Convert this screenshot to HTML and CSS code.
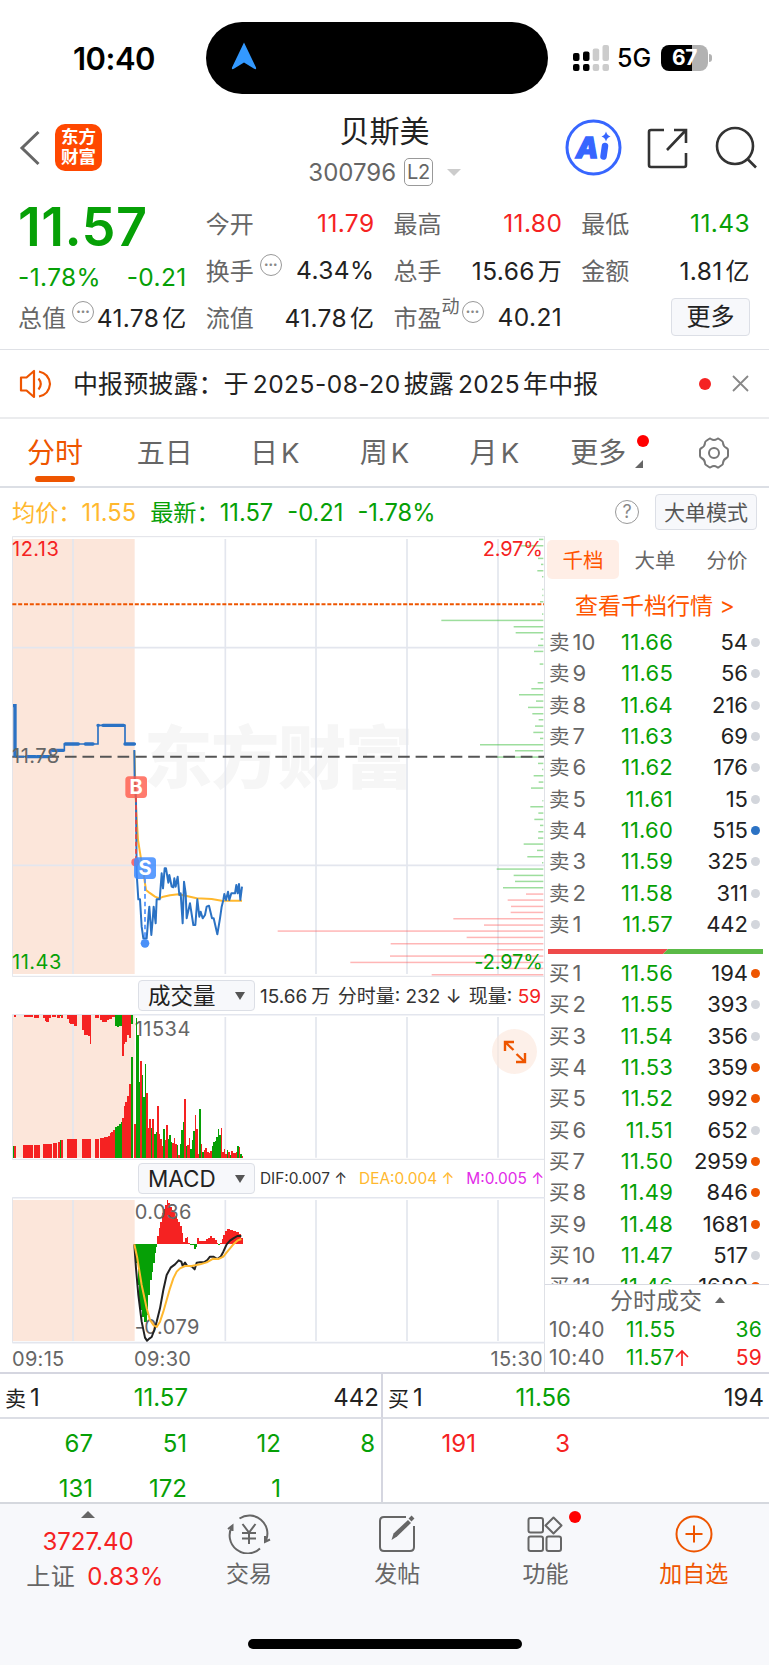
FILE: index.html
```html
<!DOCTYPE html>
<html lang="zh-CN">
<head>
    <meta charset="UTF-8">
    <meta name="viewport" content="width=device-width, initial-scale=1.0">
    <title>贝斯美 300796</title>
    <link rel="stylesheet" href="styles.css">
</head>
<body>
    <div class="status-bar">
        <div class="clock">10:40</div>
        <div class="island">
            <svg width="26" height="30" viewBox="0 0 26 30"><path d="M13 .5 25 25.500q.6 2.600-1.800 1.200L13 20.500 2.800 26.700Q.4 28.100 1 25.500Z" fill="#3399ff"/></svg>
        </div>
        <svg class="signal" width="37" height="26" viewBox="0 0 37 26">
            <g fill="#000"><rect x="0" y="8" width="6.500" height="8" rx="2"/><rect x="10" y="6.500" width="6.500" height="9.500" rx="2"/><rect x="0" y="19" width="6.500" height="7" rx="2"/><rect x="10" y="19" width="6.500" height="7" rx="2"/></g>
            <g fill="#ccc"><rect x="19.700" y="3.500" width="6.500" height="12.500" rx="2"/><rect x="29.500" y="0" width="6.500" height="16" rx="2"/><rect x="19.700" y="19" width="6.500" height="7" rx="2"/><rect x="29.500" y="19" width="6.500" height="7" rx="2"/></g>
        </svg>
        <div class="network">5G</div>
        <div class="battery">67</div>
        <div class="battery-tip"></div>
    </div>

    <div class="title-bar">
        <div class="title-left">
            <svg width="22" height="38" viewBox="0 0 22 38"><path d="M19.500 3 3 19l16.500 16" fill="none" stroke="#666" stroke-width="3"/></svg>
            <div class="logo">东方<br>财富</div>
        </div>
        <div class="title-center">
            <div class="stock-name">贝斯美</div>
            <div class="stock-code">300796<span class="level">L2</span><i class="tri-down"></i></div>
        </div>
        <div class="title-right">
            <svg width="57" height="57" viewBox="0 0 57 57"><circle cx="28.500" cy="28.500" r="26.500" fill="#fff" stroke="#3766ff" stroke-width="3"/><text x="11" y="39" class="ai-text" textLength="21">A</text><path d="m40 27-1.500 10.500" stroke="#3766ff" stroke-width="6.500" stroke-linecap="round"/><path d="M41 12.500q1 4 4.500 5-3.500 1-4.500 5-1-4-4.500-5 3.500-1 4.500-5Z" fill="#3766ff"/></svg>
            <svg width="44" height="44" viewBox="0 0 44 44" fill="none" stroke="#333" stroke-width="2.600"><path d="M18 4H5q-2 0-2 2v33q0 2 2 2h33q2 0 2-2V27M28 4h12v13M39.500 4.500 21 24"/></svg>
            <svg width="44" height="44" viewBox="0 0 44 44" fill="none" stroke="#333" stroke-width="2.600"><circle cx="21" cy="20" r="18"/><path d="M33.500 33 42 41.500"/></svg>
        </div>
    </div>

    <div class="quote">
        <div class="price-box down">
            <div class="price">11.57</div>
            <div class="cell"><span>-1.78%</span><span>-0.21</span></div>
        </div>
        <div class="cell"><label>今开</label><span class="up">11.79</span></div>
        <div class="cell"><label>最高</label><span class="up">11.80</span></div>
        <div class="cell"><label>最低</label><span class="down">11.43</span></div>
        <div class="cell"><label>换手<i class="dots">•••</i></label><span>4.34%</span></div>
        <div class="cell"><label>总手</label><span>15.66<b>万</b></span></div>
        <div class="cell"><label>金额</label><span>1.81<b>亿</b></span></div>
        <div class="cell"><label>总值<i class="dots">•••</i></label><span>41.78<b>亿</b></span></div>
        <div class="cell"><label>流值</label><span>41.78<b>亿</b></span></div>
        <div class="cell"><label>市盈<sup>动</sup><i class="dots tight">•••</i></label><span>40.21</span></div>
        <div class="cell right"><button class="more-btn">更多</button></div>
    </div>

    <div class="notice">
        <svg width="34" height="30" viewBox="0 0 34 30" fill="none" stroke="#ee5500" stroke-width="2.200"><path d="M2 8.500h5.500L15 2v26l-7.500-6.500H2Z" stroke-linejoin="round"/><path d="M19.500 9.500q4.500 5.500 0 11M20 2.500q10 2 11 12.500-1 10.500-11 12.500"/></svg>
        <div class="notice-text">中报预披露：于<em>2025-08-20</em>披露<em>2025</em>年中报</div>
        <i class="red-dot"></i>
        <svg width="17" height="17" viewBox="0 0 17 17"><path d="m1 1 15 15M16 1 1 16" stroke="#888" stroke-width="1.800"/></svg>
    </div>

    <div class="tabs">
        <div class="tab active">分时</div>
        <div class="tab">五日</div>
        <div class="tab">日<em>K</em></div>
        <div class="tab">周<em>K</em></div>
        <div class="tab">月<em>K</em></div>
        <div class="tab more">更多<i class="red-dot"></i><i class="corner"></i></div>
        <div class="tab gear">
            <svg width="34" height="32" viewBox="0 0 34 32" fill="none" stroke="#777" stroke-width="2"><path d="M12 2q1-1 2 0 3 2 6 0 1-1 2 0l3 2q1 .6 1 2 .3 3.500 3.500 5 1.500.8 1.500 2v6q0 1.200-1.500 2-3.200 1.500-3.500 5 0 1.400-1 2l-3 2q-1 1-2 0-3-2-6 0-1 1-2 0l-3-2q-1-.6-1-2-.3-3.500-3.500-5Q3 20.200 3 19v-6q0-1.200 1.500-2Q7.700 9.500 8 6q0-1.400 1-2Z" stroke-linejoin="round"/><circle cx="17" cy="16" r="5"/></svg>
        </div>
    </div>

    <div class="info-row">
        <span class="avg">均价：<em>11.55</em></span>
        <span class="down">最新：<em>11.57</em><em>-0.21</em><em>-1.78%</em></span>
        <i class="help">?</i>
        <button class="mode-btn">大单模式</button>
    </div>

    <div class="main">
        <div class="charts">
            <!-- price chart, three units per pixel -->
            <svg class="chart" width="533" height="441" viewBox="36 18 1599 1323">
                <rect x="37" y="27" width="367" height="1305" fill="#fce6da"/>
                <text class="watermark" x="432" y="760" textLength="808">东方财富</text>
                <g class="grid"><path d="M37 20h1598M37 1339h1598M37 20v1319"/><path class="thick" d="M37 353h1595M37 1006h1595M219 27v1305M676 27v1305M948 27v1305M1221 27v1305M1494 27v1305"/></g>
                <g id="profile"></g>
                <path d="M37 223h1595" stroke="#ee5500" stroke-width="6" stroke-dasharray="12 5.500"/>
                <path d="M37 680h1595" stroke="#555" stroke-width="6" stroke-dasharray="35 17.600"/>
                <g class="price-line"><path stroke-width="10" d="M39 527h6v153"/><path stroke-width="5" d="M45 680h107v-19h41v-19h101v-56h81v56h32"/><path stroke-width="10" stroke-linecap="round" d="M80 680h26M112 680h34M158 661h32M196 642h39M256 642h23M294 586h1M309 586h62M375 642h28"/></g>
                <g transform="translate(360 630)" fill="none" stroke-width="6" stroke-linejoin="round">
                    <path stroke="#ffb82e" d="M43 32 48 200 54 300 62 350 72 410 78 450 88 458 105 470 118 475 130 470 150 466 175 463 200 468 230 475 275 477 305 482H366"/>
                    <path stroke="#2b72c4" d="M43 30 44 120 48 180 50 400 55 478H60L65 560 70 595H80L86 520 88 500 94 585 98 540 101 500 107 550 110 478H119L122 440 125 400 129 445 134 385H138L145 428 148 405 155 440 160 442 163 415 167 440 173 410 178 465 182 460 188 550 192 425 197 460 200 535 210 490 220 555H226L232 478 238 530 242 515 248 535 255 525 260 500 267 497 276 535H281L292 583 300 535 305 500 310 480 313 462 318 480 324 455 328 480 334 460H345L349 435 353 460 357 432 361 480 366 440"/>
                </g>
                <path d="M408 803v195" stroke="#f5453a" stroke-width="5" stroke-dasharray="14 8"/>
                <circle cx="406" cy="997" r="12" fill="#fa6b70"/>
                <path d="M435 1046v190" stroke="#4a90ff" stroke-width="5" stroke-dasharray="14 9"/>
                <circle cx="435" cy="1240" r="13" fill="#4a90f8"/>
                <rect x="376" y="739" width="65" height="65" rx="11" fill="#ff5a4a" opacity=".8"/>
                <text class="mark" x="408" y="793">B</text>
                <rect x="402" y="982" width="66" height="65" rx="11" fill="#3f8cff" opacity=".85"/>
                <text class="mark" x="435" y="1036">S</text>
                <g class="axis"><text class="up" x="36" y="77">12.13</text><text x="36" y="698">11.78</text><text class="down" x="36" y="1317">11.43</text><text class="up end" x="1628" y="77">2.97%</text><text class="down end" x="1628" y="1317">-2.97%</text></g>
            </svg>

            <div class="sub-head">
                <button>成交量<i></i></button>
                <div class="vol-text"><span>15.66<b>万</b></span><span>分时量: 232 ↓</span><span>现量: <em class="up">59</em></span></div>
            </div>
            <div class="chart-wrap">
                <svg class="chart" width="533" height="146" viewBox="36 117 1599 438">
                    <rect x="37" y="119" width="367" height="429" fill="#fce6da"/>
                    <g class="grid"><path class="thick" d="M37 119h1598"/><path d="M37 553h1598M37 119v434"/><path class="thick" d="M219 126v422M676 126v422M948 126v422M1221 126v422M1494 126v422"/></g>
                    <g class="axis"><text x="404" y="183">11534</text></g>
                    <g id="volume" shape-rendering="crispEdges"></g>
                </svg>
                <div class="expand">
                    <svg width="24" height="24" viewBox="0 0 24 24" fill="none" stroke="#ee5500" stroke-width="2.400"><path d="M2 11V2h9M2 2l8.500 8M22 13v9h-9M22 22l-8.500-8"/></svg>
                </div>
            </div>

            <div class="sub-head">
                <button>MACD<i></i></button>
                <div class="macd-text"><span>DIF:0.007 ↑</span><span class="avg">DEA:0.004 ↑</span><span class="magenta">M:0.005 ↑</span></div>
            </div>
            <svg class="chart" width="533" height="147" viewBox="36 666 1599 441">
                <rect x="37" y="675" width="367" height="423" fill="#fce6da"/>
                <g class="grid"><path class="thick" d="M37 668h1598M37 1103h1598"/><path d="M37 668v435"/><path class="thick" d="M219 675v423M676 675v423M948 675v423M1221 675v423M1494 675v423"/></g>
                <g id="macd" shape-rendering="crispEdges"></g>
                <g class="axis"><text x="404" y="732">0.036</text><text x="404" y="1078">-0.079</text></g>
                <path fill="none" stroke="#222" stroke-width="6" stroke-linejoin="round" d="M403 808 408 880 415 960 425 1040 435 1088 441 1097 449 1090 455 1086 463 1065 470 1040 480 1000 490 945 500 900 512 878 525 868 536 856 544 860 548 873 555 863 561 872 575 874 584 883 590 863 600 862H612L622 855 630 845H640L652 852 662 845 670 830 680 808 690 797 700 790 712 783H724"/>
                <path fill="none" stroke="#ffb82e" stroke-width="6" stroke-linejoin="round" d="M403 808 412 850 425 930 440 1000 450 1035 460 1050 470 1056 480 1040 490 1010 500 975 510 940 520 910 530 890 540 880 555 873H575L600 868 620 862 640 851 655 852 670 845 685 826 700 808 712 797 724 792"/>
            </svg>
            <div class="times"><span>09:15</span><span>09:30</span><span>15:30</span></div>
        </div>

        <div class="book">
            <div class="book-tabs"><span class="active">千档</span><span>大单</span><span>分价</span></div>
            <div class="book-link">查看千档行情 &gt;</div>
            <div class="levels" id="sells"></div>
            <div class="ratio"><svg width="215" height="5" viewBox="0 0 215 5"><path d="M0 0h120l-5 5H0Z" fill="#ee4a4a"/><path d="M120 0h95v5H115Z" fill="#5bba47"/></svg></div>
            <div class="levels buys" id="buys"></div>
            <div class="deals">
                <div class="deals-title">分时成交<i class="tri-up"></i></div>
                <div class="deal"><span>10:40</span><span class="down">11.55</span><span class="down">36</span></div>
                <div class="deal"><span>10:40</span><span class="down">11.57<svg width="14" height="18" viewBox="0 0 14 18" fill="none" stroke="#f52222" stroke-width="1.700"><path d="M7 17V2M1 8l6-6 6 6"/></svg></span><span class="up">59</span></div>
            </div>
        </div>
    </div>

    <div class="queue">
        <div class="queue-head"><span>卖<em>1</em></span><span class="down">11.57</span><span>442</span></div>
        <div class="queue-head"><span>买<em>1</em></span><span class="down">11.56</span><span>194</span></div>
        <div class="queue-list down"><span>67</span><span>51</span><span>12</span><span>8</span><span>131</span><span>172</span><span>1</span></div>
        <div class="queue-list up"><span>191</span><span>3</span></div>
    </div>

    <div class="bottom">
        <div class="bottom-row">
            <div class="index-box">
                <i class="tri-up"></i>
                <div class="up">3727.40</div>
                <div class="index-change"><b>上证</b><span class="up">0.83%</span></div>
            </div>
            <div class="nav-item">
                <svg width="44" height="40" viewBox="0 0 44 40" fill="none" stroke="#666" stroke-width="2"><path d="M12.500 4.500A18 18 0 0 1 39 26.500M33 34.500A18 18 0 0 1 5 12.500M1 15l4.500-3.500V17M38 22v6l5-2.500"/><path d="m15.500 10 6.500 8.500 6.500-8.500M22 18.500V30M15 19h14M15 24.500h14"/></svg>
                交易
            </div>
            <div class="nav-item">
                <svg width="44" height="40" viewBox="0 0 44 40" fill="none" stroke="#666" stroke-width="2"><path d="M31 3H9Q5 3 5 7v26q0 4 4 4h26q4 0 4-4V12"/><path d="m16.500 26 2-6.500L33 6l3 3-14 13.500Z" fill="#666" stroke="none"/><path d="m35 6 3-3" stroke-width="4"/></svg>
                发帖
            </div>
            <div class="nav-item">
                <svg width="44" height="40" viewBox="0 0 44 40" fill="none" stroke="#666" stroke-width="2"><rect x="5.500" y="4" width="14.500" height="14.500" rx="2"/><rect x="5.500" y="22.500" width="14.500" height="14.500" rx="2"/><rect x="23.500" y="22.500" width="14.500" height="14.500" rx="2"/><path d="m30.500 3.500 8 8-8 8-8-8Z" stroke-linejoin="round"/></svg>
                功能
                <i class="red-dot"></i>
            </div>
            <div class="nav-item orange">
                <svg width="44" height="40" viewBox="0 0 44 40" fill="none" stroke="#ee5500" stroke-width="2"><circle cx="22" cy="20" r="17.500"/><path d="M22 11.500v17M13.500 20h17"/></svg>
                加自选
            </div>
        </div>
        <div class="home-bar"></div>
    </div>

    <script src="script.js"></script>
</body>
</html>
```

FILE: styles.css
```css
* {
    margin: 0;
    padding: 0;
    box-sizing: border-box;
}

body {
    width: 769px;
    height: 1665px;
    overflow: hidden;
    background: #fff;
    color: #222;
    font-family: Inter, "Noto Sans CJK SC", sans-serif;
    font-size: 24px;
}

i, em {
    font-style: normal;
}

b {
    font-weight: 400;
}

svg {
    display: block;
    flex: none;
}

button {
    font: inherit;
    color: #222;
    background: #f7f8fb;
    border: 1px solid #dcdfe6;
    border-radius: 4px;
}

.up {
    color: #f52222;
    fill: #f52222;
}

.down {
    color: #06a006;
    fill: #06a006;
}

.avg {
    color: #ffb82e;
}

.magenta {
    color: #e22be8;
}

.orange {
    color: #ee5500;
}

.red-dot {
    width: 12px;
    height: 12px;
    border-radius: 50%;
    background: #ff0000;
}

.tri-up {
    border: 7px solid transparent;
    border-top: 0;
    border-bottom: 7px solid #666;
}

.tri-down {
    border: 7px solid transparent;
    border-bottom: 0;
    border-top: 7px solid #ccc;
}

/* status bar */
.status-bar {
    display: flex;
    align-items: center;
    height: 72px;
    margin-top: 22px;
    padding-left: 73px;
    color: #000;
}

.clock {
    width: 133px;
    font-size: 31px;
    font-weight: 600;
    letter-spacing: -0.5px;
}

.island {
    width: 342px;
    height: 72px;
    padding: 20px 25px;
    border-radius: 36px;
    background: #000;
}

.signal {
    margin-left: 25px;
}

.network {
    width: 44px;
    margin-left: 7px;
    font-size: 25px;
    font-weight: 500;
}

.battery {
    width: 47px;
    height: 26px;
    border-radius: 8px;
    background: linear-gradient(90deg, #000 66%, #b2b2b2 66%);
    color: #fff;
    font-size: 21px;
    font-weight: 700;
    line-height: 26px;
    text-align: center;
    letter-spacing: -0.5px;
}

.battery-tip {
    width: 3px;
    height: 8px;
    margin-left: 1px;
    border-radius: 0 3px 3px 0;
    background: #b2b2b2;
}

/* title bar */
.title-bar {
    display: grid;
    grid-template-columns: 1fr auto 1fr;
    height: 106px;
}

.title-left {
    display: flex;
    align-items: center;
    gap: 14px;
    height: 107px;
    padding-left: 19px;
}

.logo {
    width: 47px;
    height: 47px;
    padding-top: 3px;
    border-radius: 10px;
    background: #ff4800;
    color: #fff;
    font-size: 17.5px;
    font-weight: 700;
    line-height: 20px;
    text-align: center;
}

.title-center {
    padding-top: 15px;
    text-align: center;
}

.stock-name {
    font-size: 30px;
    line-height: 44px;
}

.stock-code {
    display: flex;
    align-items: center;
    height: 38px;
    color: #666;
}

.level {
    height: 28px;
    margin: 0 14px 0 8px;
    padding: 0 2px;
    border: 1px solid #999;
    border-radius: 5px;
    font-size: 20px;
    line-height: 27px;
    letter-spacing: -0.5px;
}

.title-right {
    display: flex;
    align-items: center;
    justify-content: flex-end;
    height: 107px;
    padding-right: 11px;
}

.title-right svg + svg {
    margin-left: 24px;
}

.ai-text {
    fill: #3766ff;
    stroke: #3766ff;
    stroke-width: 1.5;
    font-size: 29px;
    font-weight: 800;
    font-style: italic;
}

/* quote */
.quote {
    display: grid;
    grid-template-columns: repeat(4, 1fr);
    grid-template-rows: repeat(3, 47px);
    column-gap: 19px;
    height: 150px;
    padding: 0 19px 0 18px;
    border-bottom: 1px solid #dfe1e6;
}

.price-box {
    grid-row: span 2;
}

.price {
    height: 63px;
    font-size: 54px;
    font-weight: 600;
    line-height: 54px;
    letter-spacing: 0.4px;
}

.price-box .cell {
    height: 28px;
}

.cell {
    display: flex;
    align-items: center;
    justify-content: space-between;
    padding-bottom: 2px;
    white-space: nowrap;
}

.price-box .cell {
    padding-bottom: 0;
}

.cell.right {
    justify-content: flex-end;
}

.cell label {
    display: flex;
    color: #666;
}

.cell span {
    font-size: 24.5px;
    letter-spacing: 0.4px;
}

.cell span b {
    margin-left: 3px;
    font-size: 24px;
}

.cell sup {
    margin-top: -4px;
    font-size: 18px;
    line-height: 24px;
}

.dots {
    width: 22px;
    height: 22px;
    margin: 2px 0 0 6px;
    border: 1.5px solid #999;
    border-radius: 50%;
    color: #888;
    font-size: 8px;
    line-height: 19px;
    text-align: center;
}

.dots.tight {
    margin-left: 2px;
}

.more-btn {
    width: 79px;
    height: 38px;
    line-height: 32px;
}

/* notice */
.notice {
    display: flex;
    align-items: center;
    height: 69px;
    padding: 0 20px 0 19px;
    border-bottom: 2px solid #ebecee;
}

.notice-text {
    flex: 1;
    padding: 0 0 3px 20px;
    font-size: 25px;
    letter-spacing: 0.1px;
}

.notice-text em {
    margin: 0 3px 0 4px;
    font-size: 24.5px;
    letter-spacing: 0.5px;
}

.notice .red-dot {
    margin-right: 21px;
    background: #f52222;
}

/* tabs */
.tabs {
    display: flex;
    height: 69px;
    border-bottom: 2px solid #dcdfe5;
    color: #666;
    font-size: 28px;
    line-height: 68px;
}

.tab {
    position: relative;
    width: 110px;
    text-align: center;
}

.tab em {
    margin-left: 3px;
    font-size: 27.5px;
}

.tab.active {
    color: #ee5500;
}

.tab.active::after {
    content: '';
    position: absolute;
    left: 35px;
    bottom: 4px;
    width: 40px;
    height: 6px;
    border-radius: 3px;
    background: #ee5500;
}

.tab.more {
    padding-right: 12px;
}

.tab .red-dot {
    position: absolute;
    top: 16px;
    left: 88px;
}

.corner {
    position: absolute;
    top: 41px;
    left: 86px;
    border-left: 8px solid transparent;
    border-bottom: 8px solid #666;
}

.tab.gear {
    display: flex;
    align-items: center;
    justify-content: center;
}

/* info row */
.info-row {
    display: flex;
    align-items: center;
    height: 48px;
    padding: 0 12px;
    font-size: 23.2px;
    white-space: nowrap;
}

.info-row span {
    padding-bottom: 3px;
}

.info-row em {
    font-size: 23.7px;
}

.info-row span + span {
    margin-left: 14px;
}

.info-row em + em {
    margin-left: 14px;
}

.help {
    width: 24px;
    height: 24px;
    margin-left: auto;
    border: 1.5px solid #999;
    border-radius: 50%;
    color: #888;
    font-size: 18px;
    line-height: 21px;
    text-align: center;
}

.mode-btn {
    width: 102px;
    height: 36px;
    margin-left: 16px;
    color: #555;
    font-size: 21px;
    line-height: 31px;
}

/* main area */
.main {
    display: flex;
    height: 838px;
    border-bottom: 2px solid #d5d6e0;
}

.charts {
    width: 545px;
    padding-left: 12px;
    border-right: 1px solid #dfe1e6;
}

.grid path {
    fill: none;
    stroke: #e0e2e8;
    stroke-width: 3;
}

.grid .thick {
    stroke: #e3e6ee;
    stroke-width: 5;
}

.watermark {
    fill: #f6f6f6;
    font-size: 205px;
    font-weight: 900;
}

.price-line path {
    fill: none;
    stroke: #2b72c4;
}

.axis text {
    fill: #666;
    font-size: 60px;
    letter-spacing: 1.5px;
}

.axis .up {
    fill: #f52222;
}

.axis .down {
    fill: #06a006;
}

.axis .end {
    text-anchor: end;
    letter-spacing: -0.5px;
}

.mark {
    fill: #fff;
    font-size: 60px;
    font-weight: 700;
    text-anchor: middle;
}

.sub-head {
    display: flex;
    align-items: center;
    height: 37px;
    padding-left: 126px;
    white-space: nowrap;
}

.sub-head button {
    display: flex;
    align-items: center;
    justify-content: space-between;
    width: 117px;
    height: 31px;
    padding: 0 9px;
    font-size: 22.5px;
    line-height: 28px;
}

.sub-head button i {
    border: 5px solid transparent;
    border-top: 8px solid #555;
    border-bottom: 0;
}

.vol-text,
.macd-text {
    display: flex;
    flex: 1;
    justify-content: space-between;
    padding: 0 3px 2px 5px;
    font-size: 19px;
    color: #333;
}

.macd-text {
    padding: 0 0 0 5px;
    font-size: 15.4px;
}

.macd-text .avg {
    color: #ffb82e;
}

.macd-text .magenta {
    color: #e22be8;
}

.vol-text b {
    margin-left: 4px;
}

.chart-wrap {
    position: relative;
}

.expand {
    position: absolute;
    top: 15px;
    right: 7px;
    display: flex;
    align-items: center;
    justify-content: center;
    width: 45px;
    height: 45px;
    border-radius: 50%;
    background: rgba(252, 230, 218, 0.6);
}

.times {
    display: grid;
    grid-template-columns: 122px 1fr auto;
    padding-right: 1px;
    color: #666;
    font-size: 20px;
    letter-spacing: 0.3px;
    line-height: 30px;
}

/* order book */
.book {
    display: flex;
    flex-direction: column;
    flex: 1;
}

.book-tabs {
    display: flex;
    margin-top: 4px;
    padding-left: 2px;
    color: #666;
    font-size: 20.5px;
    line-height: 36px;
    text-align: center;
}

.book-tabs span {
    width: 72px;
    padding-top: 3px;
    border-radius: 5px;
}

.book-tabs .active {
    background: #ffeee6;
    color: #ff5500;
}

.book-link {
    height: 48px;
    padding-left: 30px;
    color: #ff5500;
    font-size: 23px;
    line-height: 54px;
}

.levels {
    flex: none;
    height: 314px;
    overflow: hidden;
}

.level-row {
    display: grid;
    grid-template-columns: 50px 74px 75px auto;
    align-items: center;
    height: 31.3px;
    padding-left: 4px;
    font-size: 22px;
    line-height: 31px;
    text-align: right;
}

.level-row .down {
    letter-spacing: 0.2px;
}

.level-row .name {
    color: #666;
    font-size: 20.5px;
    text-align: left;
    white-space: nowrap;
}

.level-row .name em {
    margin-left: 3px;
    font-size: 22px;
}

.dot {
    width: 9px;
    height: 9px;
    margin-left: 3px;
    border-radius: 50%;
    background: #d3d6dc;
}

.dot.orange {
    background: #ee5500;
}

.dot.blue {
    background: #2b72c4;
}

.ratio {
    height: 18px;
    padding: 8px 3px 0;
}

.levels.buys {
    height: 326px;
}

.deals {
    border-top: 1px solid #d8dae2;
    color: #666;
    font-size: 21px;
}

.deals-title {
    display: flex;
    align-items: center;
    height: 31px;
    padding: 0 0 4px 65px;
    font-size: 23px;
}

.deals-title .tri-up {
    margin: 3px 0 0 13px;
    border-width: 0 5px 6px;
}

.deal {
    display: grid;
    grid-template-columns: 77px 1fr auto;
    height: 28px;
    padding: 0 7px 0 4px;
    line-height: 28px;
    letter-spacing: 0.2px;
}

.deal .down {
    display: flex;
    align-items: center;
}

/* queue */
.queue {
    display: grid;
    grid-template-columns: 383px 1fr;
    height: 130px;
    border-bottom: 2px solid #d5d8de;
}

.queue > div:nth-child(odd) {
    border-right: 2px solid #d5d6e0;
}

.queue-head {
    display: grid;
    grid-template-columns: 60px 123px 1fr;
    height: 45px;
    padding: 0 2px 0 5px;
    border-bottom: 2px solid #dcdee5;
    line-height: 48px;
    text-align: right;
}

.queue-head:nth-child(2) {
    padding-right: 5px;
}

.queue-head span:first-child {
    text-align: left;
    font-size: 21px;
}

.queue-head em {
    margin-left: 4px;
    font-size: 24px;
}

.queue-list {
    display: grid;
    grid-template-columns: 93px repeat(3, 94px);
    grid-auto-rows: 45px;
    padding-top: 2px;
    height: 83px;
    overflow: hidden;
    line-height: 45px;
    text-align: right;
}

/* bottom bar */
.bottom {
    height: 161px;
    background: #f7f8fb;
}

.bottom-row {
    display: flex;
    height: 135px;
    padding-left: 15px;
}

.index-box {
    display: flex;
    flex-direction: column;
    align-items: center;
    width: 160px;
    padding: 7px 14px 0 0;
    line-height: 35px;
    white-space: nowrap;
}

.index-box .tri-up {
    margin-bottom: 6px;
}

.index-box b {
    margin-right: 12px;
    color: #666;
}

.index-change {
    margin-left: 14px;
    letter-spacing: 0.5px;
}

.nav-item {
    position: relative;
    width: 148.2px;
    padding-top: 10px;
    color: #666;
    font-size: 23px;
    line-height: 40px;
    text-align: center;
}

.nav-item.orange {
    color: #ee5500;
}

.nav-item svg {
    margin: 0 auto;
}

.nav-item .red-dot {
    position: absolute;
    top: 7px;
    left: 98px;
}

.home-bar {
    width: 274px;
    height: 10px;
    margin-left: 248px;
    border-radius: 5px;
    background: #000;
}
```

FILE: script.js
```javascript
const RED = '#f52222';
const GREEN = '#06a006';

const sells = [
    [10, '11.66', 54], [9, '11.65', 56], [8, '11.64', 216], [7, '11.63', 69], [6, '11.62', 176],
    [5, '11.61', 15], [4, '11.60', 515, 'blue'], [3, '11.59', 325], [2, '11.58', 311], [1, '11.57', 442]
];

const buys = [
    [1, '11.56', 194, 'orange'], [2, '11.55', 393], [3, '11.54', 356], [4, '11.53', 359, 'orange'],
    [5, '11.52', 992, 'orange'], [6, '11.51', 652], [7, '11.50', 2959, 'orange'], [8, '11.49', 846, 'orange'],
    [9, '11.48', 1681, 'orange'], [10, '11.47', 517], [11, '11.46', 1689, 'orange']
];

function renderLevels(id, side, rows) {
    document.getElementById(id).innerHTML = rows.map(([n, price, qty, dot]) => `
        <div class="level-row">
            <span class="name">${side}<em>${n}</em></span>
            <span class="down">${price}</span>
            <span>${qty}</span>
            <i class="dot ${dot || ''}"></i>
        </div>
    `).join('');
}

function rect(x, y, w, h, color) {
    return `<rect x="${x}" y="${y}" width="${w}" height="${h}" fill="${color}"/>`;
}

// volume by price: [y, left edge]
const profileGreen = [
    [28, 807], [47, 750], [85, 804], [103, 813], [122, 802], [140, 816], [178, 817], [196, 817], [215, 810],
    [252, 816], [271, 514], [290, 731], [308, 737], [327, 812], [346, 804], [364, 792], [402, 809], [458, 803],
    [476, 784], [494, 747], [513, 798], [532, 774], [551, 787], [569, 806], [588, 795], [607, 790], [625, 810],
    [644, 630], [662, 735], [681, 680], [700, 804], [718, 816], [737, 791], [756, 806], [774, 783], [812, 817],
    [830, 781], [849, 805], [868, 793], [886, 810], [905, 805], [924, 804], [942, 761], [961, 801], [980, 772],
    [998, 816], [1017, 680], [1036, 731], [1054, 735], [1073, 699]
];
const profileRed = [
    [1092, 768], [1110, 713], [1129, 723], [1147, 722], [1166, 550], [1185, 642], [1203, 23], [1222, 590],
    [1241, 362], [1259, 680], [1278, 360], [1297, 241], [1315, 705], [1334, 485]
];

function renderProfile() {
    const bars = (list, color) => list.map(([y, x]) => rect(x + 810, y - 2, 820 - x, 4.5, color)).join('');
    document.getElementById('profile').innerHTML =
        bars(profileGreen, 'rgba(60, 190, 60, 0.5)') + bars(profileRed, 'rgba(255, 80, 80, 0.42)');
}

// one bar per minute from 09:30, top edge and colour
const minutes = ('448r 128g 180g 322g 257r 300g 367g 267g 355r 460r 433r 460g 433r 478g 472g 392r 476r 492r 512r ' +
    '463g 494r 450r 492g 480g 500g 505r 490r 508r 510g 540r 508g 465g 442g 373r 512g 510r 490r 522g 495g 467g ' +
    '420r 463r 538r 403g 508r 530g 525r 518r 532r 534r 528r 512g 500g 497g 487g 462g 480g 458r 530r 522r 537r ' +
    '525g 532r 540g 528r 534r 535r 530r 512g 517r 537g 542r').split(' ');

// auction bars: [x, width, top, colour]
const auction = [
    [38, 5, 514, 'g'], [43, 5, 514, 'r'], [70, 29, 511, 'r'], [103, 17, 510, 'r'], [130, 25, 507, 'r'],
    [158, 14, 504, 'r'], [175, 5, 500, 'r'], [180, 4, 496, 'g'], [184, 5, 494, 'r'], [200, 31, 493, 'r'],
    [247, 27, 492, 'r'], [284, 13, 491, 'r'], [300, 12, 488, 'r'], [312, 12, 485, 'r'], [324, 5, 482, 'r'],
    [329, 5, 475, 'r'], [334, 5, 470, 'r'], [339, 5, 466, 'r'], [344, 8, 456, 'g'], [352, 6, 453, 'g'],
    [358, 4, 448, 'g'], [362, 4, 440, 'g'], [366, 5, 430, 'r'], [371, 5, 393, 'r'], [376, 5, 380, 'r'],
    [381, 5, 362, 'r'], [386, 6, 328, 'r'], [392, 7, 246, 'g']
];

// unmatched volume hanging from the top: [x, width, bottom, colour]
const unmatched = [
    [43, 6, 126, 'r'], [71, 27, 126, 'r'], [103, 14, 129, 'r'], [130, 5, 128, 'r'], [135, 4, 137, 'r'],
    [139, 8, 141, 'r'], [147, 5, 129, 'r'], [157, 10, 127, 'r'], [172, 8, 128, 'r'], [180, 4, 123, 'g'],
    [184, 5, 129, 'r'], [201, 5, 132, 'r'], [206, 5, 143, 'r'], [211, 12, 148, 'r'], [223, 8, 154, 'r'],
    [247, 5, 164, 'r'], [252, 12, 180, 'r'], [264, 5, 182, 'r'], [269, 5, 207, 'r'], [284, 12, 129, 'r'],
    [301, 5, 134, 'r'], [306, 14, 140, 'r'], [320, 8, 136, 'r'], [328, 8, 131, 'r'], [336, 8, 126, 'r'],
    [344, 8, 152, 'g'], [352, 6, 157, 'g'], [358, 8, 153, 'g'], [366, 5, 244, 'r'], [371, 5, 208, 'r'],
    [376, 5, 200, 'r'], [381, 5, 181, 'r'], [386, 6, 189, 'r'], [392, 7, 146, 'g']
];

function renderVolume() {
    const color = c => c === 'r' ? RED : GREEN;
    let html = '';
    minutes.forEach((m, i) => {
        const top = parseInt(m);
        html += rect(403 + i * 4.54, top, 4.6, 549 - top, color(m.slice(-1)));
    });
    auction.forEach(([x, w, top, c]) => html += rect(x, top, w, 549 - top, color(c)));
    unmatched.forEach(([x, w, bottom, c]) => html += rect(x, 121, w, bottom - 121, color(c)));
    document.getElementById('volume').innerHTML = html;
}

const macd = [
    [403, 830], [408, 865], [413, 930], [417, 975], [421, 1005], [426, 1025], [432, 1040], [440, 1020], [445, 960],
    [450, 915], [455, 890], [460, 865], [464, 835], [469, 815], [472, 782], [477, 760], [481, 740], [486, 715],
    [490, 702], [495, 690], [500, 676], [505, 685], [510, 695], [515, 705], [520, 712], [525, 722], [530, 732],
    [535, 742], [540, 752], [545, 775], [550, 802], [555, 790], [560, 787], [565, 805], [570, 809], [575, 809],
    [579, 811], [583, 821], [588, 817], [592, 790], [598, 797], [605, 798], [612, 797], [618, 793], [625, 788],
    [630, 782], [637, 788], [644, 795], [650, 803], [655, 811], [660, 803], [665, 793], [670, 780], [676, 768],
    [682, 763], [690, 765], [700, 767], [708, 770], [716, 777], [724, 788], [730, 788]
];

function renderMacd() {
    let html = '';
    for (let i = 0; i < macd.length - 1; i++) {
        const [x, y] = macd[i];
        const w = macd[i + 1][0] - x + 0.3;
        html += y < 807 ? rect(x, y, w, 808 - y, RED) : rect(x, 807, w, y - 807, GREEN);
    }
    document.getElementById('macd').innerHTML = html;
}

renderLevels('sells', '卖', sells);
renderLevels('buys', '买', buys);
renderProfile();
renderVolume();
renderMacd();
```
